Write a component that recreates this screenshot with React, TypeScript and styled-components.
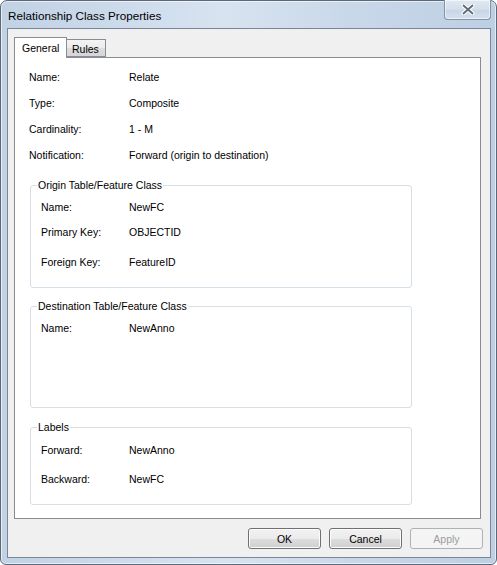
import React from "react";
import styled, { createGlobalStyle } from "styled-components";

const GlobalStyle = createGlobalStyle`
  html, body {
    margin: 0;
    padding: 0;
    background: #ffffff;
  }
  body {
    font-family: "Liberation Sans", Arial, sans-serif;
    -webkit-font-smoothing: antialiased;
  }
  * {
    box-sizing: border-box;
  }
`;

const Window = styled.div`
  width: 497px;
  height: 565px;
  display: flex;
  flex-direction: column;
  padding: 0 5px 6px 6px;
  border: 1px solid #5d6979;
  border-radius: 7px 7px 6px 6px;
  background: linear-gradient(
    90deg,
    #c1d2e5 0%,
    #cfdded 30%,
    #d8e3f0 45%,
    #c9d8e9 70%,
    #bdcfe3 100%
  );
  box-shadow: inset 0 0 0 1px rgba(255, 255, 255, 0.6);
`;

const TitleBar = styled.div`
  height: 27px;
  display: flex;
  justify-content: space-between;
  align-items: flex-start;
`;

const Title = styled.span`
  margin: 7px 0 0 1px;
  font-size: 11.7px;
  line-height: 15px;
  color: #000000;
`;

const CloseButton = styled.button`
  margin-top: -1px;
  width: 47px;
  height: 20px;
  padding: 0;
  display: flex;
  align-items: center;
  justify-content: center;
  border: 1px solid #8593a4;
  border-top: none;
  border-radius: 0 0 4px 4px;
  background: linear-gradient(#e2eaf3 0%, #d2deea 50%, #c6d5e5 51%, #d4e0ed 100%);
  box-shadow: inset 0 0 0 1px rgba(255, 255, 255, 0.55);
  cursor: default;
`;

const Client = styled.div`
  flex: 1;
  display: flex;
  flex-direction: column;
  border: 1px solid #7a8696;
  background: #f0f0f0;
  padding: 8px 7px 8px 6px;
`;

const TabStrip = styled.div`
  display: flex;
  align-items: flex-end;
  margin-right: 2px;
`;

const Tab = styled.div<{ $active?: boolean }>`
  position: relative;
  z-index: ${(p) => (p.$active ? 2 : 1)};
  height: ${(p) => (p.$active ? 21 : 18)}px;
  margin-bottom: ${(p) => (p.$active ? -1 : 0)}px;
  padding: ${(p) => (p.$active ? "0 0 0 7px" : "2px 0 0 5px")};
  width: ${(p) => (p.$active ? 53 : 39)}px;
  display: flex;
  align-items: center;
  border: 1px solid #898c95;
  border-bottom: ${(p) => (p.$active ? "none" : "1px solid #898c95")};
  border-left: ${(p) => (p.$active ? "1px solid #898c95" : "none")};
  background: ${(p) =>
    p.$active
      ? "#ffffff"
      : "linear-gradient(#f3f3f3 0%, #ebebeb 50%, #dddddd 51%, #d6d6d6 100%)"};
  font-size: 10.5px;
  line-height: 14px;
  color: #000000;
`;

const Panel = styled.div`
  flex: 1;
  display: flex;
  flex-direction: column;
  margin-right: 2px;
  padding: 12px 14px 0 14px;
  background: #ffffff;
  border: 1px solid #898c95;
`;

const PropList = styled.div`
  display: flex;
  flex-direction: column;
  gap: 12px;
`;

const PropRow = styled.div<{ $mt?: number; $indent?: number }>`
  display: flex;
  height: 14px;
  margin-top: ${(p) => p.$mt ?? 0}px;
  padding-left: ${(p) => p.$indent ?? 0}px;
  font-size: 10.5px;
  line-height: 14px;
  color: #000000;
  white-space: nowrap;
`;

const PropLabel = styled.span<{ $w: number }>`
  width: ${(p) => p.$w}px;
  flex-shrink: 0;
`;

const Group = styled.fieldset<{ $mt: number; $pb: number }>`
  width: 382px;
  min-width: 0;
  margin: ${(p) => p.$mt}px 0 0 1px;
  padding: 0 0 ${(p) => p.$pb}px 6px;
  border: 1px solid #d5dfe5;
  border-radius: 3px;
`;

const GroupTitle = styled.legend`
  padding: 0 1px;
  font-size: 10.5px;
  line-height: 14px;
  color: #000000;
`;

const ButtonRow = styled.div`
  display: flex;
  justify-content: flex-end;
  gap: 8px;
  margin-top: 9px;
`;

const Button = styled.button<{ $disabled?: boolean }>`
  width: 73px;
  height: 21px;
  padding: 0;
  border-radius: 3px;
  font-family: "Liberation Sans", Arial, sans-serif;
  font-size: 10.5px;
  line-height: 14px;
  cursor: default;
  border: 1px solid ${(p) => (p.$disabled ? "#adb2b5" : "#707070")};
  color: ${(p) => (p.$disabled ? "#9d9d9d" : "#000000")};
  background: ${(p) =>
    p.$disabled
      ? "#f4f4f4"
      : "linear-gradient(#f2f2f2 0%, #ebebeb 50%, #dddddd 51%, #cfcfcf 100%)"};
  box-shadow: ${(p) => (p.$disabled ? "none" : "inset 0 0 0 1px #fcfcfc")};
`;

const CloseGlyph = () => (
  <svg width="14" height="11" viewBox="0 0 14 11">
    <path d="M2.5 1.5 L11.5 9.5 M11.5 1.5 L2.5 9.5" stroke="#ffffff" strokeWidth="4" strokeLinecap="round" />
    <path d="M2.5 1.5 L11.5 9.5 M11.5 1.5 L2.5 9.5" stroke="#5f6a77" strokeWidth="1.8" strokeLinecap="round" />
  </svg>
);

const general = [
  ["Name:", "Relate"],
  ["Type:", "Composite"],
  ["Cardinality:", "1 - M"],
  ["Notification:", "Forward (origin to destination)"],
];

const App = () => {
  return (
    <>
      <GlobalStyle />
      <Window>
        <TitleBar>
          <Title>Relationship Class Properties</Title>
          <CloseButton aria-label="Close">
            <CloseGlyph />
          </CloseButton>
        </TitleBar>

        <Client>
          {/* Tabs */}
          <TabStrip>
            <Tab $active>General</Tab>
            <Tab>Rules</Tab>
          </TabStrip>

          <Panel>
            <PropList>
              {general.map(([label, value]) => (
                <PropRow key={label}>
                  <PropLabel $w={100}>{label}</PropLabel>
                  <span>{value}</span>
                </PropRow>
              ))}
            </PropList>

            <Group $mt={16} $pb={18}>
              <GroupTitle>Origin Table/Feature Class</GroupTitle>
              <PropRow $mt={8} $indent={4}>
                <PropLabel $w={88}>Name:</PropLabel>
                <span>NewFC</span>
              </PropRow>
              <PropRow $mt={11} $indent={4}>
                <PropLabel $w={88}>Primary Key:</PropLabel>
                <span>OBJECTID</span>
              </PropRow>
              <PropRow $mt={16} $indent={4}>
                <PropLabel $w={88}>Foreign Key:</PropLabel>
                <span>FeatureID</span>
              </PropRow>
            </Group>

            <Group $mt={11} $pb={72}>
              <GroupTitle>Destination Table/Feature Class</GroupTitle>
              <PropRow $mt={8} $indent={4}>
                <PropLabel $w={88}>Name:</PropLabel>
                <span>NewAnno</span>
              </PropRow>
            </Group>

            <Group $mt={12} $pb={18}>
              <GroupTitle>Labels</GroupTitle>
              <PropRow $mt={9} $indent={4}>
                <PropLabel $w={88}>Forward:</PropLabel>
                <span>NewAnno</span>
              </PropRow>
              <PropRow $mt={15} $indent={4}>
                <PropLabel $w={88}>Backward:</PropLabel>
                <span>NewFC</span>
              </PropRow>
            </Group>
          </Panel>

          <ButtonRow>
            <Button>OK</Button>
            <Button>Cancel</Button>
            <Button $disabled>Apply</Button>
          </ButtonRow>
        </Client>
      </Window>
    </>
  );
};

export default App;
